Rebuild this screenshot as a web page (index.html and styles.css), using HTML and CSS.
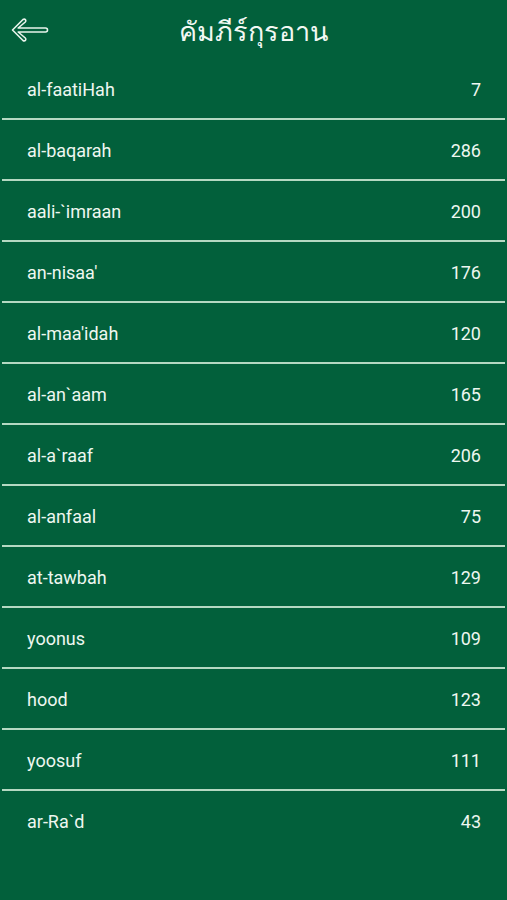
FILE: index.html
```html
<!DOCTYPE html>
<html>

<head>
    <meta charset='utf-8'>
    <title>คัมภีร์กุรอาน</title>
    <meta name='viewport' content='width=device-width, initial-scale=1'>
    <link rel="stylesheet" href="styles.css">
</head>

<body>

  <div class="header">
    <svg class="back" width="38" height="26" viewBox="0 0 38 26">
      <path d="M1.5 13 L12 2.5 Q13.5 1.5 14.5 2.8 Q15.3 4 14.3 5 L7.2 11 L34.5 11 Q36.5 11 36.5 13 Q36.5 15 34.5 15 L7.2 15 L14.3 21 Q15.3 22 14.5 23.2 Q13.5 24.5 12 23.5 Z"
        fill="none" stroke="#e9f4ec" stroke-width="1.6" stroke-linejoin="round"/>
    </svg>
    <h1>คัมภีร์กุรอาน</h1>
  </div>

  <ul class="surah-list">
    <li><span>al-faatiHah</span><span>7</span></li>
    <li><span>al-baqarah</span><span>286</span></li>
    <li><span>aali-`imraan</span><span>200</span></li>
    <li><span>an-nisaa'</span><span>176</span></li>
    <li><span>al-maa'idah</span><span>120</span></li>
    <li><span>al-an`aam</span><span>165</span></li>
    <li><span>al-a`raaf</span><span>206</span></li>
    <li><span>al-anfaal</span><span>75</span></li>
    <li><span>at-tawbah</span><span>129</span></li>
    <li><span>yoonus</span><span>109</span></li>
    <li><span>hood</span><span>123</span></li>
    <li><span>yoosuf</span><span>111</span></li>
    <li><span>ar-Ra`d</span><span>43</span></li>
  </ul>

</body>

</html>
```

FILE: styles.css
```css
body {
  font-family: Roboto, "Noto Sans", sans-serif;
  margin: 0;
  padding: 0;
  height: 900px;
  background-color: #02603b;
  color: #eef7f0;
}

.header {
  position: relative;
  height: 59px;
  display: flex;
  justify-content: center;
  align-items: center;
}

.header .back {
  position: absolute;
  left: 11px;
  top: 17px;
}

.header h1 {
  margin: 0;
  margin-top: 4px;
  font-size: 27px;
  font-weight: normal;
  font-family: "Noto Sans", "DejaVu Sans", sans-serif;
  color: #f2f8f3;
}

.surah-list {
  list-style: none;
  margin: 0;
  padding: 0;
}

.surah-list li {
  display: flex;
  justify-content: space-between;
  align-items: center;
  height: 57px;
  margin: 0 2px;
  padding: 2px 24px 0 25px;
  border-bottom: 2px solid #b5d9c2;
  font-size: 18px;
}

.surah-list li:last-child {
  border-bottom: none;
}
```
